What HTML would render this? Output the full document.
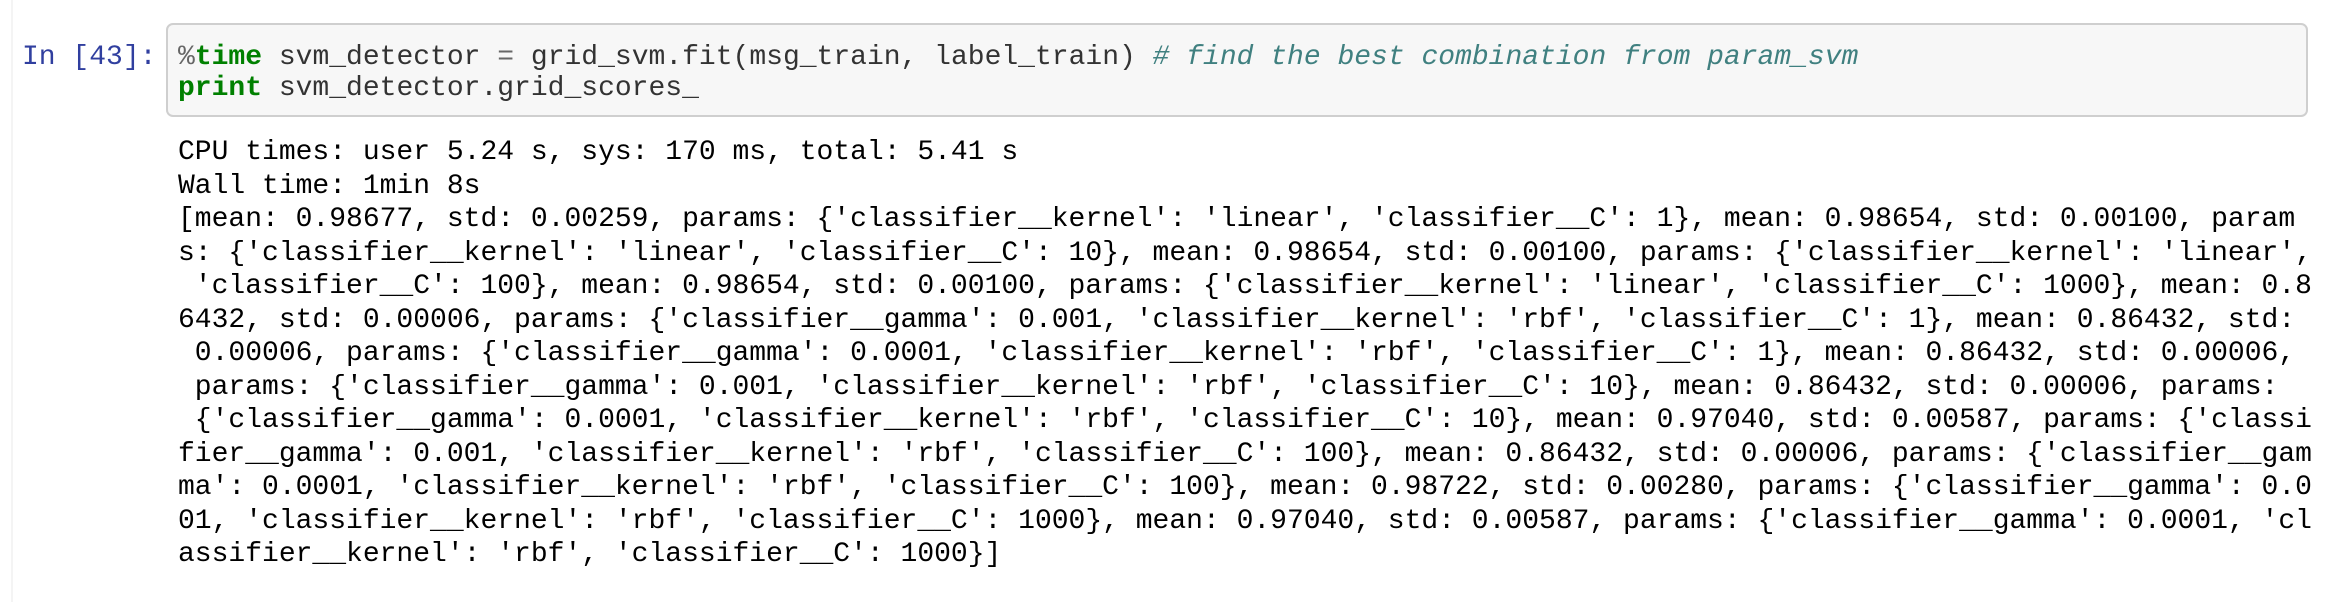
<!DOCTYPE html>
<html><head><meta charset="utf-8"><style>
html,body{margin:0;padding:0;background:#fff;width:2348px;height:602px;overflow:hidden;position:relative}
.l{position:absolute;white-space:pre;font-family:"Liberation Mono",monospace;font-size:28px;line-height:33.5px;color:#000;left:178px}
.p{position:absolute;left:22px;top:41px;white-space:pre;font-family:"Liberation Mono",monospace;font-size:28px;line-height:33.5px;color:#303F9F}
.box{position:absolute;left:166px;top:23px;width:2138px;height:90px;background:#f7f7f7;border:2px solid #cfcfcf;border-radius:7px}
.k{color:#008000;font-weight:bold}
.o{color:#666}
.c{color:#408080;font-style:italic}
.code{color:#333}
.edge{position:absolute;left:11px;top:0;width:2px;height:602px;background:#f4f4f4}
</style></head><body>
<div class="edge"></div>
<div class="p">In [43]:</div>
<div class="box"></div>
<div class="l code" style="top:41px"><span class="o">%</span><span class="k">time</span> svm_detector <span class="o">=</span> grid_svm.fit(msg_train, label_train) <span class="c"># find the best combination from param_svm</span></div>
<div class="l code" style="top:72px"><span class="k">print</span> svm_detector.grid_scores_</div>
<div class="l" style="top:136px">CPU times: user 5.24 s, sys: 170 ms, total: 5.41 s</div>
<div class="l" style="top:169.5px">Wall time: 1min 8s</div>
<div class="l" style="top:203px">[mean: 0.98677, std: 0.00259, params: {'classifier__kernel': 'linear', 'classifier__C': 1}, mean: 0.98654, std: 0.00100, param</div>
<div class="l" style="top:236.5px">s: {'classifier__kernel': 'linear', 'classifier__C': 10}, mean: 0.98654, std: 0.00100, params: {'classifier__kernel': 'linear',</div>
<div class="l" style="top:270px"> 'classifier__C': 100}, mean: 0.98654, std: 0.00100, params: {'classifier__kernel': 'linear', 'classifier__C': 1000}, mean: 0.8</div>
<div class="l" style="top:303.5px">6432, std: 0.00006, params: {'classifier__gamma': 0.001, 'classifier__kernel': 'rbf', 'classifier__C': 1}, mean: 0.86432, std:</div>
<div class="l" style="top:337px"> 0.00006, params: {'classifier__gamma': 0.0001, 'classifier__kernel': 'rbf', 'classifier__C': 1}, mean: 0.86432, std: 0.00006,</div>
<div class="l" style="top:370.5px"> params: {'classifier__gamma': 0.001, 'classifier__kernel': 'rbf', 'classifier__C': 10}, mean: 0.86432, std: 0.00006, params:</div>
<div class="l" style="top:404px"> {'classifier__gamma': 0.0001, 'classifier__kernel': 'rbf', 'classifier__C': 10}, mean: 0.97040, std: 0.00587, params: {'classi</div>
<div class="l" style="top:437.5px">fier__gamma': 0.001, 'classifier__kernel': 'rbf', 'classifier__C': 100}, mean: 0.86432, std: 0.00006, params: {'classifier__gam</div>
<div class="l" style="top:471px">ma': 0.0001, 'classifier__kernel': 'rbf', 'classifier__C': 100}, mean: 0.98722, std: 0.00280, params: {'classifier__gamma': 0.0</div>
<div class="l" style="top:504.5px">01, 'classifier__kernel': 'rbf', 'classifier__C': 1000}, mean: 0.97040, std: 0.00587, params: {'classifier__gamma': 0.0001, 'cl</div>
<div class="l" style="top:538px">assifier__kernel': 'rbf', 'classifier__C': 1000}]</div>
</body></html>
